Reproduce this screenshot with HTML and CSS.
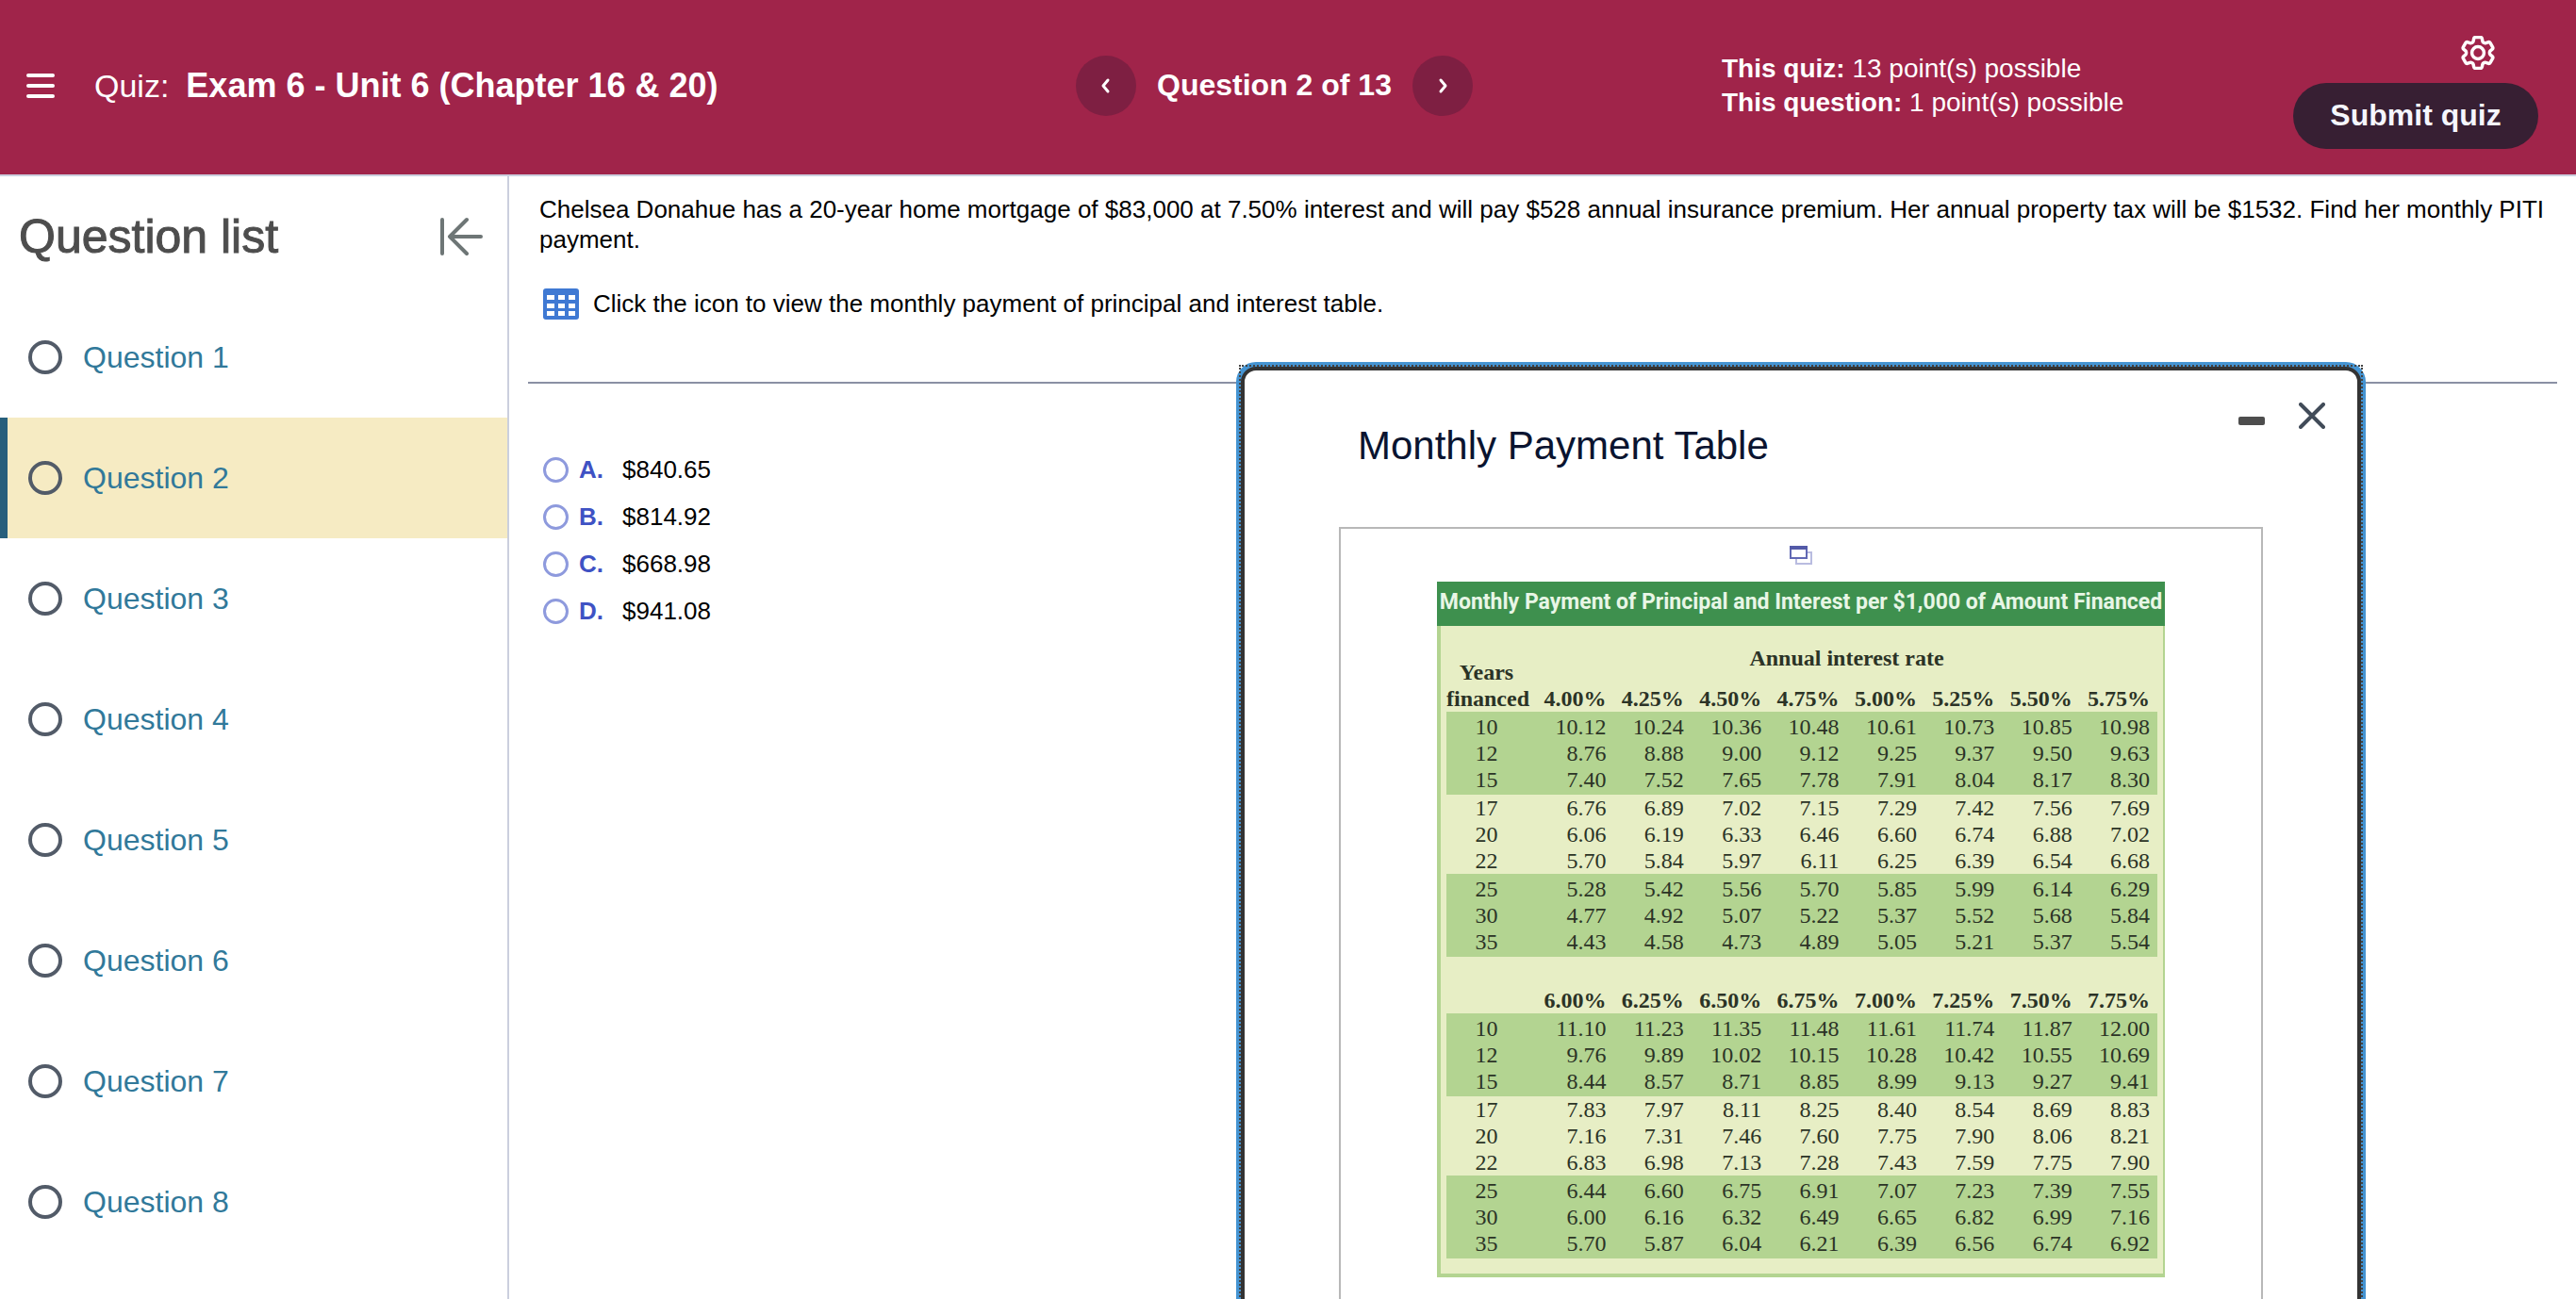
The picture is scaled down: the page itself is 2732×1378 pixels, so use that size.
FILE: index.html
```html
<!DOCTYPE html>
<html lang="en">
  <head>
    <meta charset="utf-8">
    <title>Exam 6 - Unit 6 (Chapter 16 &amp; 20)</title>
    <meta name="viewport" content="width=device-width, initial-scale=1.0">
    <link rel="stylesheet" href="styles.css">
  </head>
  <body>
    <header class="topbar">
      <div class="brand">
        <button class="icon-btn" aria-label="Menu">
          <svg width="30" height="28" viewBox="0 0 30 28" stroke="#fff" stroke-width="4" stroke-linecap="round"><path d="M2 3h26M2 14h26M2 25h26"/></svg>
        </button>
        <h1><span>Quiz:</span> Exam 6 - Unit 6 (Chapter 16 &amp; 20)</h1>
      </div>
      <nav class="pager">
        <button class="round" aria-label="Previous question">
          <svg width="12" height="18" viewBox="0 0 12 18" fill="none" stroke="#fff" stroke-width="3" stroke-linecap="round" stroke-linejoin="round"><path d="M8 3L3 9l5 6"/></svg>
        </button>
        <span>Question 2 of 13</span>
        <button class="round" aria-label="Next question">
          <svg width="12" height="18" viewBox="0 0 12 18" fill="none" stroke="#fff" stroke-width="3" stroke-linecap="round" stroke-linejoin="round"><path d="M4 3l5 6-5 6"/></svg>
        </button>
      </nav>
      <div class="points">
        <p><b>This quiz:</b> 13 point(s) possible</p>
        <p><b>This question:</b> 1 point(s) possible</p>
      </div>
      <div class="actions">
        <button class="icon-btn gear" aria-label="Settings">
          <svg width="36" height="36" viewBox="2.2 2.2 19.6 19.6" fill="none" stroke="#fff" stroke-width="1.9" stroke-linejoin="round">
            <path d="M9.594 3.94c.09-.542.56-.94 1.11-.94h2.593c.55 0 1.02.398 1.11.94l.213 1.281c.063.374.313.686.645.87.074.04.147.083.22.127.325.196.72.257 1.075.124l1.217-.456a1.125 1.125 0 0 1 1.37.49l1.296 2.247a1.125 1.125 0 0 1-.26 1.431l-1.003.827c-.293.241-.438.613-.43.992a7.723 7.723 0 0 1 0 .255c-.008.378.137.75.43.991l1.004.827c.424.35.534.955.26 1.43l-1.298 2.247a1.125 1.125 0 0 1-1.369.491l-1.217-.456c-.355-.133-.75-.072-1.076.124a6.47 6.47 0 0 1-.22.128c-.331.183-.581.495-.644.869l-.213 1.281c-.09.543-.56.94-1.11.94h-2.594c-.55 0-1.019-.398-1.11-.94l-.213-1.281c-.062-.374-.312-.686-.644-.87a6.52 6.52 0 0 1-.22-.127c-.325-.196-.72-.257-1.076-.124l-1.217.456a1.125 1.125 0 0 1-1.369-.49l-1.297-2.247a1.125 1.125 0 0 1 .26-1.431l1.004-.827c.292-.24.437-.613.43-.991a6.932 6.932 0 0 1 0-.255c.007-.38-.138-.751-.43-.992l-1.004-.827a1.125 1.125 0 0 1-.26-1.43l1.297-2.247a1.125 1.125 0 0 1 1.37-.491l1.216.456c.356.133.751.072 1.076-.124.072-.044.146-.086.22-.128.332-.183.582-.495.644-.869l.214-1.28Z"/>
            <circle cx="12" cy="12" r="3.5"/>
          </svg>
        </button>
        <button class="submit">Submit quiz</button>
      </div>
    </header>

    <div class="layout">
      <aside class="sidebar">
        <div class="sidebar-head">
          <h2>Question list</h2>
          <button class="icon-btn" aria-label="Collapse question list">
            <svg width="46" height="42" viewBox="0 0 46 42" fill="none" stroke="#6e7676" stroke-width="4" stroke-linecap="round" stroke-linejoin="round"><path d="M3 3v36M44 21H11M29 3L11 21l18 18"/></svg>
          </button>
        </div>
        <ul class="questions">
          <li><a href="#q1"><i></i>Question 1</a></li>
          <li class="current"><a href="#q2"><i></i>Question 2</a></li>
          <li><a href="#q3"><i></i>Question 3</a></li>
          <li><a href="#q4"><i></i>Question 4</a></li>
          <li><a href="#q5"><i></i>Question 5</a></li>
          <li><a href="#q6"><i></i>Question 6</a></li>
          <li><a href="#q7"><i></i>Question 7</a></li>
          <li><a href="#q8"><i></i>Question 8</a></li>
        </ul>
      </aside>

      <main class="content">
        <p class="prompt">Chelsea Donahue has a 20-year home mortgage of $83,000 at 7.50% interest and will pay $528 annual insurance premium. Her annual property tax will be $1532. Find her monthly PITI payment.</p>
        <div class="hint">
          <button class="icon-btn" aria-label="Monthly payment table">
            <svg width="38" height="33" viewBox="0 0 38 33"><rect width="38" height="33" rx="3" fill="#3f79d3"/><path fill="#fff" d="M4 7h8v5H4zM16 7h7v5h-7zM27 7h7v5h-7zM4 16h8v5H4zM16 16h7v5h-7zM27 16h7v5h-7zM4 24h8v5H4zM16 24h7v5h-7zM27 24h7v5h-7z"/></svg>
          </button>
          <span>Click the icon to view the monthly payment of principal and interest table.</span>
        </div>
        <hr>
        <form class="answers">
          <label><input type="radio" name="answer"><b>A.</b><span>$840.65</span></label>
          <label><input type="radio" name="answer"><b>B.</b><span>$814.92</span></label>
          <label><input type="radio" name="answer"><b>C.</b><span>$668.98</span></label>
          <label><input type="radio" name="answer"><b>D.</b><span>$941.08</span></label>
        </form>

        <section class="dialog" role="dialog" aria-labelledby="dialogTitle">
          <div class="dialog-head">
            <h3 id="dialogTitle">Monthly Payment Table</h3>
            <div class="dialog-tools">
              <button class="icon-btn" aria-label="Minimize">
                <svg width="28" height="28" viewBox="0 0 28 28"><rect x="0" y="15" width="28" height="9" rx="2" fill="#4d4d4d"/></svg>
              </button>
              <button class="icon-btn" aria-label="Close">
                <svg width="28" height="28" viewBox="0 0 28 28" stroke="#414b58" stroke-width="4" stroke-linecap="round"><path d="M2 2l24 24M26 2L2 26"/></svg>
              </button>
            </div>
          </div>
          <div class="dialog-body">
            <button class="icon-btn" aria-label="Open in new window">
              <svg width="26" height="22" viewBox="0 0 26 22" fill="none"><path d="M20 8h4v12H8v-5" stroke="#b9bce0" stroke-width="2"/><rect x="2" y="2" width="17" height="12" fill="#fff" stroke="#6269b4" stroke-width="2"/><path d="M1 3h19" stroke="#535aa8" stroke-width="4"/></svg>
            </button>
            <figure class="rates">
              <figcaption>Monthly Payment of Principal and Interest per $1,000 of Amount Financed</figcaption>
              <table>
                <thead>
                  <tr><th rowspan="2">Years<br>financed</th><th class="over" colspan="8">Annual interest rate</th></tr>
                  <tr><th>4.00%</th><th>4.25%</th><th>4.50%</th><th>4.75%</th><th>5.00%</th><th>5.25%</th><th>5.50%</th><th>5.75%</th></tr>
                </thead>
                <tbody class="band">
                  <tr><td>10</td><td>10.12</td><td>10.24</td><td>10.36</td><td>10.48</td><td>10.61</td><td>10.73</td><td>10.85</td><td>10.98</td></tr>
                  <tr><td>12</td><td>8.76</td><td>8.88</td><td>9.00</td><td>9.12</td><td>9.25</td><td>9.37</td><td>9.50</td><td>9.63</td></tr>
                  <tr><td>15</td><td>7.40</td><td>7.52</td><td>7.65</td><td>7.78</td><td>7.91</td><td>8.04</td><td>8.17</td><td>8.30</td></tr>
                </tbody>
                <tbody>
                  <tr><td>17</td><td>6.76</td><td>6.89</td><td>7.02</td><td>7.15</td><td>7.29</td><td>7.42</td><td>7.56</td><td>7.69</td></tr>
                  <tr><td>20</td><td>6.06</td><td>6.19</td><td>6.33</td><td>6.46</td><td>6.60</td><td>6.74</td><td>6.88</td><td>7.02</td></tr>
                  <tr><td>22</td><td>5.70</td><td>5.84</td><td>5.97</td><td>6.11</td><td>6.25</td><td>6.39</td><td>6.54</td><td>6.68</td></tr>
                </tbody>
                <tbody class="band">
                  <tr><td>25</td><td>5.28</td><td>5.42</td><td>5.56</td><td>5.70</td><td>5.85</td><td>5.99</td><td>6.14</td><td>6.29</td></tr>
                  <tr><td>30</td><td>4.77</td><td>4.92</td><td>5.07</td><td>5.22</td><td>5.37</td><td>5.52</td><td>5.68</td><td>5.84</td></tr>
                  <tr><td>35</td><td>4.43</td><td>4.58</td><td>4.73</td><td>4.89</td><td>5.05</td><td>5.21</td><td>5.37</td><td>5.54</td></tr>
                </tbody>
                <tbody>
                  <tr class="second"><th></th><th>6.00%</th><th>6.25%</th><th>6.50%</th><th>6.75%</th><th>7.00%</th><th>7.25%</th><th>7.50%</th><th>7.75%</th></tr>
                </tbody>
                <tbody class="band">
                  <tr><td>10</td><td>11.10</td><td>11.23</td><td>11.35</td><td>11.48</td><td>11.61</td><td>11.74</td><td>11.87</td><td>12.00</td></tr>
                  <tr><td>12</td><td>9.76</td><td>9.89</td><td>10.02</td><td>10.15</td><td>10.28</td><td>10.42</td><td>10.55</td><td>10.69</td></tr>
                  <tr><td>15</td><td>8.44</td><td>8.57</td><td>8.71</td><td>8.85</td><td>8.99</td><td>9.13</td><td>9.27</td><td>9.41</td></tr>
                </tbody>
                <tbody>
                  <tr><td>17</td><td>7.83</td><td>7.97</td><td>8.11</td><td>8.25</td><td>8.40</td><td>8.54</td><td>8.69</td><td>8.83</td></tr>
                  <tr><td>20</td><td>7.16</td><td>7.31</td><td>7.46</td><td>7.60</td><td>7.75</td><td>7.90</td><td>8.06</td><td>8.21</td></tr>
                  <tr><td>22</td><td>6.83</td><td>6.98</td><td>7.13</td><td>7.28</td><td>7.43</td><td>7.59</td><td>7.75</td><td>7.90</td></tr>
                </tbody>
                <tbody class="band">
                  <tr><td>25</td><td>6.44</td><td>6.60</td><td>6.75</td><td>6.91</td><td>7.07</td><td>7.23</td><td>7.39</td><td>7.55</td></tr>
                  <tr><td>30</td><td>6.00</td><td>6.16</td><td>6.32</td><td>6.49</td><td>6.65</td><td>6.82</td><td>6.99</td><td>7.16</td></tr>
                  <tr><td>35</td><td>5.70</td><td>5.87</td><td>6.04</td><td>6.21</td><td>6.39</td><td>6.56</td><td>6.74</td><td>6.92</td></tr>
                </tbody>
              </table>
            </figure>
          </div>
        </section>
      </main>
    </div>
  </body>
</html>
```
FILE: styles.css
```css
* {
  margin: 0;
  padding: 0;
  box-sizing: border-box;
}
body {
  display: flex;
  flex-direction: column;
  height: 100vh;
  overflow: hidden;
  font-family: "Liberation Sans", Arial, sans-serif;
  font-size: 26px;
  color: #000;
}
button {
  border: 0;
  background: none;
  font: inherit;
  color: inherit;
  cursor: pointer;
}
svg {
  display: block;
}
.icon-btn {
  flex: none;
}

/* top bar */
.topbar {
  display: grid;
  grid-template-columns: 1141fr 685fr 606fr 260px;
  align-items: center;
  height: 187px;
  padding: 0 40px 4px 0;
  border-bottom: 2px solid #cbcfde;
  background: #a0244a;
  color: #fff;
}
.brand {
  display: flex;
  align-items: center;
  gap: 42px;
  padding-left: 28px;
}
h1 {
  font-size: 36px;
  line-height: 40px;
}
h1 span {
  margin-right: 8px;
  font-size: 34px;
  font-weight: normal;
}
.pager {
  display: flex;
  align-items: center;
  gap: 22px;
  font-size: 32px;
  font-weight: bold;
}
.round {
  display: flex;
  align-items: center;
  justify-content: center;
  width: 64px;
  height: 64px;
  border-radius: 50%;
  background: #7e1f42;
}
.points {
  font-size: 28px;
  line-height: 36px;
}
.actions {
  display: flex;
  flex-direction: column;
  align-items: flex-end;
  gap: 14px;
  margin-top: 14px;
}
.gear {
  margin-right: 46px;
}
.submit {
  width: 100%;
  height: 70px;
  border-radius: 35px;
  background: #371f33;
  color: #f5f6fd;
  font-size: 32px;
  font-weight: bold;
}

.layout {
  display: flex;
  flex: 1;
  min-height: 0;
}

/* question list */
.sidebar {
  flex: none;
  width: 540px;
  border-right: 2px solid #cbcfde;
}
.sidebar-head {
  display: flex;
  align-items: center;
  justify-content: space-between;
  height: 128px;
  padding: 0 26px 0 20px;
}
h2 {
  color: #4d4d4d;
  font-size: 50px;
  font-weight: normal;
  -webkit-text-stroke: 1px #4d4d4d;
}
.questions {
  list-style: none;
}
.questions a {
  display: flex;
  align-items: center;
  gap: 22px;
  height: 128px;
  padding-left: 22px;
  border-left: 8px solid transparent;
  color: #31799a;
  font-size: 32px;
  text-decoration: none;
}
.questions i {
  width: 36px;
  height: 36px;
  border: 4px solid #525b68;
  border-radius: 50%;
}
.current a {
  border-color: #275f7c;
  background: #f6ebc3;
}

/* question */
.content {
  position: relative;
  flex: 1;
  overflow: hidden;
  padding: 19px 20px;
}
.prompt {
  padding: 0 12px;
  line-height: 32px;
}
.hint {
  display: flex;
  align-items: center;
  gap: 15px;
  margin: 36px 0 66px;
  padding: 0 16px;
}
hr {
  border: 0;
  border-top: 2px solid #8a90a4;
}
.answers {
  display: flex;
  flex-direction: column;
  align-items: flex-start;
  margin-top: 66px;
  padding-left: 16px;
}
.answers label {
  display: flex;
  align-items: center;
  height: 50px;
}
.answers input {
  appearance: none;
  width: 27px;
  height: 27px;
  margin-right: 11px;
  border: 3px solid #8e9add;
  border-radius: 50%;
}
.answers b {
  width: 46px;
  color: #3f52c4;
}

/* floating table window */
.dialog {
  position: absolute;
  top: 202px;
  left: 776px;
  bottom: -40px;
  width: 1188px;
  padding: 34px 100px 0;
  border: 4px solid #333;
  border-radius: 16px;
  background: #fff;
  box-shadow: 0 0 0 5px #4594d2;
}
.dialog::before {
  content: "";
  position: absolute;
  inset: -6px;
  border: 2px dotted #444;
  pointer-events: none;
}
.dialog-head {
  display: flex;
  justify-content: space-between;
  height: 132px;
  padding-left: 20px;
}
h3 {
  padding-top: 22px;
  color: #0a1430;
  font-size: 42px;
  font-weight: normal;
  line-height: 48px;
}
.dialog-tools {
  display: flex;
  align-items: flex-start;
  gap: 36px;
  margin-right: -66px;
}
.dialog-body {
  display: flex;
  flex-direction: column;
  align-items: center;
  gap: 17px;
  height: 100%;
  padding-top: 17px;
  border: 2px solid #b8b8b8;
}
.rates {
  width: 772px;
  background: #e7eec5;
  color: #2b3326;
  font-family: "Liberation Serif", "Times New Roman", serif;
  font-size: 24px;
  line-height: 28px;
}
.rates figcaption {
  height: 47px;
  background: #3e904e;
  color: #e8f6e6;
  font-family: Roboto, sans-serif;
  font-size: 23px;
  font-weight: bold;
  line-height: 44px;
  text-align: center;
  white-space: nowrap;
}
.rates table {
  width: 100%;
  table-layout: fixed;
  border: solid #b3d491;
  border-width: 0 2px 4px 4px;
  border-spacing: 0;
  padding: 0 6px 16px;
}
.rates th,
.rates td {
  padding-right: 8px;
  text-align: right;
  vertical-align: bottom;
}
.rates th:first-child[rowspan] {
  width: 95px;
}
.rates th:first-child[rowspan],
.rates td:first-child {
  padding-right: 10px;
  text-align: center;
}
.rates .over {
  padding: 20px 0 15px;
  text-align: center;
}
.rates .second th {
  padding-top: 32px;
}
.band {
  background: #b3d491;
}
.band tr:first-child td {
  padding-top: 2px;
}
.band tr:last-child td {
  padding-bottom: 2px;
}
```
